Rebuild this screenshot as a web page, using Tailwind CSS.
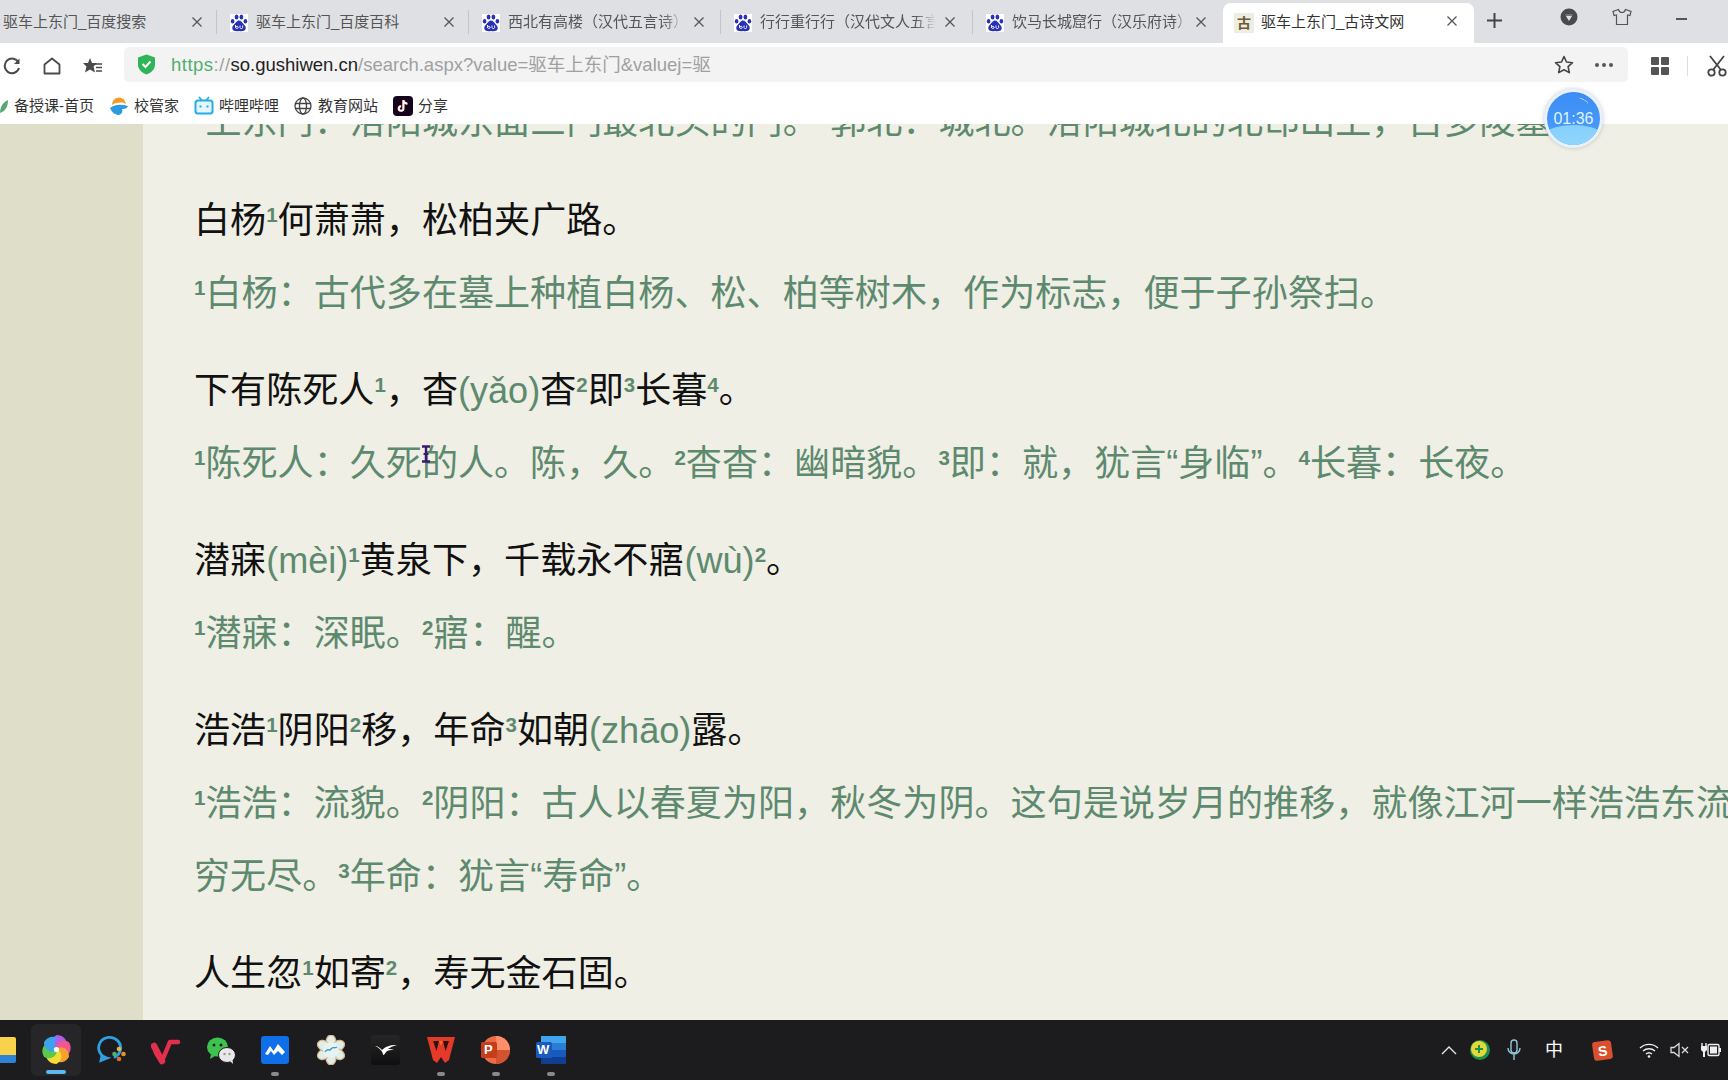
<!DOCTYPE html>
<html lang="zh-CN">
<head>
    <meta charset="UTF-8">
    <title>驱车上东门_古诗文网</title>
    <script src="https://cdn.jsdelivr.net/npm/@tailwindcss/browser@4"></script>
</head>
<body class="w-[1728px] h-[1080px] overflow-hidden flex flex-col relative bg-white font-['Liberation_Sans','Noto_Sans_CJK_SC',sans-serif]">

    <svg class="hidden">
        <symbol id="paw" viewBox="0 0 18 18">
            <rect width="18" height="18" fill="#fff"/>
            <g fill="#2932b5">
                <ellipse cx="6.600" cy="3" rx="1.900" ry="2.500"/>
                <ellipse cx="11.400" cy="3" rx="1.900" ry="2.500"/>
                <ellipse cx="2.600" cy="7.200" rx="1.800" ry="2.300"/>
                <ellipse cx="15.400" cy="7.200" rx="1.800" ry="2.300"/>
                <path d="M9 6.500c-2 0-3 2-4.500 3.500C3 11.500 1.800 13 2.400 15c.6 2.200 3.600 2.500 6.600 2 3 .5 6 .2 6.600-2 .6-2-.6-3.500-2.100-5C12 8.500 11 6.500 9 6.500z"/>
            </g>
            <path d="M5.500 11v2.500c0 1.200 2.800 1.200 2.800 0 0-1.500-2.800-1.500-2.800 0M10 11.500v2c0 1.400 2.600 1.400 2.600 0v-2" fill="none" stroke="#fff" stroke-width=".9"/>
        </symbol>
        <symbol id="x" viewBox="0 0 12 12">
            <path d="M1.500 1.500l9 9M10.500 1.500l-9 9" fill="none" stroke="#555" stroke-width="1.300"/>
        </symbol>
    </svg>

    <!-- tabs -->
    <div class="h-[43px] shrink-0 bg-[#dfe0e4] flex -ml-[36px] text-[15px] text-[#555]">
        <div class="w-[252px] h-[43px] pt-[2px] pl-[13px] pr-[13px] flex items-center">
            <svg class="w-[18px] h-[18px] shrink-0"><use href="#paw"/></svg>
            <span class="ml-[8px] w-[160px] overflow-hidden whitespace-nowrap">驱车上东门_百度搜索</span>
            <svg class="w-[12px] h-[12px] ml-[28px] -mt-[1px] shrink-0"><use href="#x"/></svg>
        </div>
        <div class="w-[252px] h-[43px] pt-[2px] pl-[13px] pr-[13px] flex items-center border-l border-[#c4c5c9] relative before:absolute before:left-[-1px] before:top-0 before:h-[10px] before:w-px before:bg-[#dfe0e4] after:absolute after:left-[-1px] after:bottom-0 after:h-[9px] after:w-px after:bg-[#dfe0e4]">
            <svg class="w-[18px] h-[18px] shrink-0"><use href="#paw"/></svg>
            <span class="ml-[8px] w-[160px] overflow-hidden whitespace-nowrap">驱车上东门_百度百科</span>
            <svg class="w-[12px] h-[12px] ml-[27px] -mt-[1px] shrink-0"><use href="#x"/></svg>
        </div>
        <div class="w-[252px] h-[43px] pt-[2px] pl-[13px] pr-[13px] flex items-center border-l border-[#c4c5c9] relative before:absolute before:left-[-1px] before:top-0 before:h-[10px] before:w-px before:bg-[#dfe0e4] after:absolute after:left-[-1px] after:bottom-0 after:h-[9px] after:w-px after:bg-[#dfe0e4]">
            <svg class="w-[18px] h-[18px] shrink-0"><use href="#paw"/></svg>
            <span class="ml-[8px] w-[176px] overflow-hidden whitespace-nowrap [mask-image:linear-gradient(to_right,#000_88%,transparent)]">西北有高楼（汉代五言诗）</span>
            <svg class="w-[12px] h-[12px] ml-[9px] -mt-[1px] shrink-0"><use href="#x"/></svg>
        </div>
        <div class="w-[252px] h-[43px] pt-[2px] pl-[13px] pr-[13px] flex items-center border-l border-[#c4c5c9] relative before:absolute before:left-[-1px] before:top-0 before:h-[10px] before:w-px before:bg-[#dfe0e4] after:absolute after:left-[-1px] after:bottom-0 after:h-[9px] after:w-px after:bg-[#dfe0e4]">
            <svg class="w-[18px] h-[18px] shrink-0"><use href="#paw"/></svg>
            <span class="ml-[8px] w-[176px] overflow-hidden whitespace-nowrap [mask-image:linear-gradient(to_right,#000_88%,transparent)]">行行重行行（汉代文人五言诗）</span>
            <svg class="w-[12px] h-[12px] ml-[8px] -mt-[1px] shrink-0"><use href="#x"/></svg>
        </div>
        <div class="w-[251px] h-[43px] pt-[2px] pl-[13px] pr-[13px] flex items-center border-l border-[#c4c5c9] relative before:absolute before:left-[-1px] before:top-0 before:h-[10px] before:w-px before:bg-[#dfe0e4] after:absolute after:left-[-1px] after:bottom-0 after:h-[9px] after:w-px after:bg-[#dfe0e4]">
            <svg class="w-[18px] h-[18px] shrink-0"><use href="#paw"/></svg>
            <span class="ml-[8px] w-[176px] overflow-hidden whitespace-nowrap [mask-image:linear-gradient(to_right,#000_92%,transparent)]">饮马长城窟行（汉乐府诗）</span>
            <svg class="w-[12px] h-[12px] ml-[7px] -mt-[1px] shrink-0"><use href="#x"/></svg>
        </div>
        <div class="w-[251px] h-[40px] mt-[3px] pl-[11px] pr-[13px] flex items-center bg-white rounded-t-[8px] text-[#333]">
            <div class="w-[20px] h-[20px] -mt-[1px] shrink-0 bg-[#eeede1] flex items-center justify-center text-[14px] leading-none font-bold text-[#6b5a35]">古</div>
            <span class="ml-[7px] w-[168px] overflow-hidden whitespace-nowrap -mt-[1px]">驱车上东门_古诗文网</span>
            <svg class="w-[12px] h-[12px] ml-[17px] -mt-[4px] shrink-0"><use href="#x"/></svg>
        </div>
        <svg class="ml-[12px] mt-[12px] w-[17px] h-[17px] shrink-0" viewBox="0 0 17 17"><path d="M8.500 1v15M1 8.500h15" stroke="#444" stroke-width="2" fill="none"/></svg>
        <svg class="ml-[57px] mt-[8px] w-[18px] h-[18px] shrink-0" viewBox="0 0 18 18"><circle cx="9" cy="9" r="8.500" fill="#4a4a4c"/><path d="M5 6.500h8L9 13z" fill="#dfe0e4"/><path d="M5 6.500h8v1.200H5z" fill="#4a4a4c"/></svg>
        <svg class="ml-[34px] mt-[8px] w-[20px] h-[18px] shrink-0" viewBox="0 0 20 18"><path d="M6.500 1.500L1 3.500l1 4 2.500-.5v9.500h11V7l2.500.5 1-4-5.500-2c-.5 2-2 3-3.500 3s-3-1-3.500-3z" fill="none" stroke="#555" stroke-width="1.200"/></svg>
        <div class="ml-[44px] mt-[18px] w-[11px] h-[1.500px] bg-[#555]"></div>
    </div>

    <!-- address bar -->
    <div class="h-[45px] shrink-0 bg-white flex items-center">
        <svg class="ml-[3px] w-[18px] h-[18px] shrink-0" viewBox="0 0 18 18"><path d="M15.500 5.500A7.300 7.300 0 1 0 16 11" fill="none" stroke="#4a4a4a" stroke-width="2"/><path d="M16.500 1.500v5.500H11z" fill="#4a4a4a"/></svg>
        <svg class="ml-[22px] w-[18px] h-[18px] shrink-0" viewBox="0 0 18 18"><path d="M9 1.500L1.500 7.500v9h15v-9z" fill="none" stroke="#4a4a4a" stroke-width="1.800" stroke-linejoin="round"/></svg>
        <svg class="ml-[22px] w-[20px] h-[18px] shrink-0" viewBox="0 0 20 18"><path d="M7 1l2 5h5l-3.500 3.500 1.500 6L7 12.500 2 15.500l1.500-6L0 6h5z" fill="#4a4a4a"/><path d="M12 7h7M13 10.500h6M13 14h6" stroke="#4a4a4a" stroke-width="1.600"/></svg>
        <div class="ml-[21px] w-[1504px] h-[35px] mb-[2px] bg-[#f3f3f3] rounded-[5px] flex items-center shrink-0">
            <svg class="ml-[13px] w-[19px] h-[21px] shrink-0" viewBox="0 0 19 21"><path d="M9.500 0.500L18 3.500v7c0 5-4 8.500-8.500 10C5 19 1 15.500 1 10.500v-7z" fill="#2fb457"/><path d="M5.500 10l3 3 5-5.500" fill="none" stroke="#fff" stroke-width="2"/></svg>
            <span class="ml-[15px] text-[18.500px] whitespace-nowrap text-[#a0a0a0]"><span class="tracking-[0.5px]"><span class="text-[#4fae6d]">https</span>://</span><span class="text-[#222]">so.gushiwen.cn</span>/search.aspx?value=驱车上东门&amp;valuej=驱</span>
            <svg class="ml-auto w-[20px] h-[19px] shrink-0" viewBox="0 0 20 19"><path d="M10 1.500l2.500 5.500 6 .7-4.400 4 1.200 5.900L10 14.700l-5.300 2.900 1.200-5.900-4.400-4 6-.7z" fill="none" stroke="#444" stroke-width="1.600" stroke-linejoin="round"/></svg>
            <div class="ml-[21px] mr-[15px] flex gap-[3px] shrink-0">
                <div class="w-[4px] h-[4px] rounded-full bg-[#555]"></div>
                <div class="w-[4px] h-[4px] rounded-full bg-[#555]"></div>
                <div class="w-[4px] h-[4px] rounded-full bg-[#555]"></div>
            </div>
        </div>
        <div class="ml-[23px] w-[18px] h-[18px] grid grid-cols-2 gap-[2px] shrink-0">
            <div class="bg-[#555] rounded-[1px]"></div><div class="bg-[#555] rounded-[1px]"></div>
            <div class="bg-[#555] rounded-[1px]"></div><div class="bg-[#555] rounded-[1px]"></div>
        </div>
        <div class="ml-[18px] w-px h-[20px] bg-[#ddd] shrink-0"></div>
        <svg class="ml-[19px] w-[20px] h-[22px] shrink-0" viewBox="0 0 20 22"><path d="M3 1l11 14M17 1L6 15" stroke="#444" stroke-width="1.800" fill="none"/><circle cx="4.500" cy="17.500" r="3.200" fill="none" stroke="#444" stroke-width="1.800"/><circle cx="15.500" cy="17.500" r="3.200" fill="none" stroke="#444" stroke-width="1.800"/></svg>
    </div>

    <!-- bookmarks -->
    <div class="h-[36px] shrink-0 bg-white flex items-center text-[15px] text-[#333] whitespace-nowrap">
        <svg class="w-[8px] h-[16px] shrink-0" viewBox="0 0 8 16"><path d="M0 15C0 9 3 4 8 2c0 6-2 11-8 13z" fill="#57a773"/></svg>
        <span class="ml-[6px]">备授课-首页</span>
        <svg class="ml-[15px] w-[20px] h-[20px] shrink-0" viewBox="0 0 20 20"><path d="M3 9a7 7 0 0 1 14-1C13 6 8 6 3 9z" fill="#f39a27"/><path d="M1 12c5-4 11-4 18-2-1 3-4 3-6 3 1 2 0 5-3 6-3 0-7-2-9-7z" fill="#2b9be0"/></svg>
        <span class="ml-[5px]">校管家</span>
        <svg class="ml-[15px] w-[20px] h-[20px] shrink-0" viewBox="0 0 20 20"><path d="M5 1l3 3.500M15 1l-3 3.500" stroke="#23ade5" stroke-width="1.800"/><rect x="1.500" y="4.500" width="17" height="13" rx="2.500" fill="#e6f6fc" stroke="#23ade5" stroke-width="2"/><path d="M6.500 9.500v2M13.500 9.500v2" stroke="#23ade5" stroke-width="2"/></svg>
        <span class="ml-[5px]">哔哩哔哩</span>
        <svg class="ml-[15px] w-[18px] h-[18px] shrink-0" viewBox="0 0 18 18"><g fill="none" stroke="#444" stroke-width="1.300"><circle cx="9" cy="9" r="8"/><ellipse cx="9" cy="9" rx="3.500" ry="8"/><path d="M1 6.500h16M1 11.500h16"/></g></svg>
        <span class="ml-[6px]">教育网站</span>
        <div class="ml-[15px] w-[20px] h-[20px] rounded-[4px] bg-[#16051a] flex items-center justify-center shrink-0">
            <svg class="w-[14px] h-[14px]" viewBox="0 0 14 14"><path d="M7 1v8.500a2.300 2.300 0 1 1-2.300-2.300M7 1.500c.5 2 2 3 4 3.200" fill="none" stroke="#e8344e" stroke-width="2"/><path d="M7.500 1v8.500a2.300 2.300 0 1 1-2.300-2.300M7.500 1.500c.5 2 2 3 4 3.200" fill="none" stroke="#fff" stroke-width="2"/></svg>
        </div>
        <span class="ml-[5px]">分享</span>
    </div>

    <!-- page -->
    <div class="h-[896px] shrink-0 bg-[#f0efe5] flex overflow-hidden">
        <div class="w-[143px] shrink-0 bg-[#dfdec9]"></div>
        <div class="-mt-[39px] ml-[51px] whitespace-nowrap text-[36.100px] leading-[73px] text-[#111]">
            <p class="text-[#5d8a6e]"><sup class="text-[20.500px] font-bold -top-[11px]">2</sup>上东门：洛阳城东面三门最北头的门。<sup class="text-[20.500px] font-bold -top-[11px]">3</sup>郭北：城北。洛阳城北的北邙山上，古多陵墓。</p>

            <p class="mt-[26px]">白杨<sup class="text-[20.500px] font-bold -top-[11px] text-[#5d8a6e]">1</sup>何萧萧，松柏夹广路。</p>
            <p class="text-[#5d8a6e]"><sup class="text-[20.500px] font-bold -top-[11px]">1</sup>白杨：古代多在墓上种植白杨、松、柏等树木，作为标志，便于子孙祭扫。</p>

            <p class="mt-[24px]">下有陈死人<sup class="text-[20.500px] font-bold -top-[11px] text-[#5d8a6e]">1</sup>，杳<span class="text-[#5d8a6e]">(yǎo)</span>杳<sup class="text-[20.500px] font-bold -top-[11px] text-[#5d8a6e]">2</sup>即<sup class="text-[20.500px] font-bold -top-[11px] text-[#5d8a6e]">3</sup>长暮<sup class="text-[20.500px] font-bold -top-[11px] text-[#5d8a6e]">4</sup>。</p>
            <p class="text-[#5d8a6e]"><sup class="text-[20.500px] font-bold -top-[11px]">1</sup>陈死人：久死的人。陈，久。<sup class="text-[20.500px] font-bold -top-[11px]">2</sup>杳杳：幽暗貌。<sup class="text-[20.500px] font-bold -top-[11px]">3</sup>即：就，犹言“身临”。<sup class="text-[20.500px] font-bold -top-[11px]">4</sup>长暮：长夜。</p>

            <p class="mt-[24px]">潜寐<span class="text-[#5d8a6e]">(mèi)</span><sup class="text-[20.500px] font-bold -top-[11px] text-[#5d8a6e]">1</sup>黄泉下，千载永不寤<span class="text-[#5d8a6e]">(wù)</span><sup class="text-[20.500px] font-bold -top-[11px] text-[#5d8a6e]">2</sup>。</p>
            <p class="text-[#5d8a6e]"><sup class="text-[20.500px] font-bold -top-[11px]">1</sup>潜寐：深眠。<sup class="text-[20.500px] font-bold -top-[11px]">2</sup>寤：醒。</p>

            <p class="mt-[24px]">浩浩<sup class="text-[20.500px] font-bold -top-[11px] text-[#5d8a6e]">1</sup>阴阳<sup class="text-[20.500px] font-bold -top-[11px] text-[#5d8a6e]">2</sup>移，年命<sup class="text-[20.500px] font-bold -top-[11px] text-[#5d8a6e]">3</sup>如朝<span class="text-[#5d8a6e]">(zhāo)</span>露。</p>
            <p class="text-[#5d8a6e]"><sup class="text-[20.500px] font-bold -top-[11px]">1</sup>浩浩：流貌。<sup class="text-[20.500px] font-bold -top-[11px]">2</sup>阴阳：古人以春夏为阳，秋冬为阴。这句是说岁月的推移，就像江河一样浩浩东流，无</p>
            <p class="text-[#5d8a6e]">穷无尽。<sup class="text-[20.500px] font-bold -top-[11px]">3</sup>年命：犹言“寿命”。</p>

            <p class="mt-[24px]">人生忽<sup class="text-[20.500px] font-bold -top-[11px] text-[#5d8a6e]">1</sup>如寄<sup class="text-[20.500px] font-bold -top-[11px] text-[#5d8a6e]">2</sup>，寿无金石固。</p>
        </div>
    </div>

    <!-- taskbar -->
    <div class="h-[60px] shrink-0 bg-[#1c1c1e] flex items-center">
        <div class="-ml-[12px] w-[28px] h-[26px] rounded-[2px] shrink-0 bg-[linear-gradient(#f8d24a_70%,#2f83d6_70%)]"></div>
        <div class="ml-[15px] w-[50px] h-[52px] rounded-[6px] bg-[#262628] flex items-center justify-center relative shrink-0">
            <svg class="w-[31px] h-[31px] -mt-[2px]" viewBox="0 0 30 30">
                <path d="M15 15C9 13 8 5 15 1c6 0 10 4 10 9-4-1-8 1-10 5z" fill="#b45be8"/>
                <path d="M15 15C9 13 8 5 15 1c6 0 10 4 10 9-4-1-8 1-10 5z" fill="#f0568f" transform="rotate(60 15 15)"/>
                <path d="M15 15C9 13 8 5 15 1c6 0 10 4 10 9-4-1-8 1-10 5z" fill="#f7a02c" transform="rotate(120 15 15)"/>
                <path d="M15 15C9 13 8 5 15 1c6 0 10 4 10 9-4-1-8 1-10 5z" fill="#f2dc38" transform="rotate(180 15 15)"/>
                <path d="M15 15C9 13 8 5 15 1c6 0 10 4 10 9-4-1-8 1-10 5z" fill="#5bc84e" transform="rotate(240 15 15)"/>
                <path d="M15 15C9 13 8 5 15 1c6 0 10 4 10 9-4-1-8 1-10 5z" fill="#3da2ee" transform="rotate(300 15 15)"/>
                <circle cx="15" cy="15" r="2.500" fill="#fff"/>
            </svg>
            <div class="absolute bottom-[2px] left-[15px] w-[20px] h-[4px] rounded-full bg-[#5cb8ee]"></div>
        </div>
        <div class="ml-[15px] w-[32px] h-[30px] shrink-0">
            <svg viewBox="0 0 32 30"><path d="M19 22a11 10.500 0 1 0-8 1l-6 2.500 1-5" fill="none" stroke="#2f9fe0" stroke-width="2.800" stroke-linecap="round"/><circle cx="23" cy="14" r="2.300" fill="#e9b92f"/><circle cx="18.500" cy="19" r="2.300" fill="#4fb36d"/><circle cx="27.500" cy="19" r="2.300" fill="#e8902f"/><circle cx="23" cy="24" r="2.300" fill="#e06a30"/></svg>
        </div>
        <div class="ml-[23px] w-[30px] h-[30px] shrink-0">
            <svg viewBox="0 0 30 30"><path d="M4 13c0 5 3 9 7 13l8-19h8" fill="none" stroke="#e2304c" stroke-width="4.500" stroke-linecap="round" stroke-linejoin="round"/><path d="M3 11l8 15" stroke="#e2304c" stroke-width="6.500" stroke-linecap="round"/></svg>
        </div>
        <div class="ml-[25px] w-[30px] h-[30px] shrink-0">
            <svg viewBox="0 0 30 30"><ellipse cx="11.500" cy="12" rx="10.500" ry="9.500" fill="#3dc24f"/><path d="M5 19l-1 5 5-3z" fill="#3dc24f"/><ellipse cx="21" cy="20" rx="8.500" ry="7.500" fill="#e8e8e8" stroke="#1c1c1e"/><path d="M24 26l3 3-.5-4.500z" fill="#e8e8e8"/><circle cx="8" cy="10" r="1.500" fill="#1c1c1e"/><circle cx="15" cy="10" r="1.500" fill="#1c1c1e"/><circle cx="18.500" cy="19" r="1.200" fill="#999"/><circle cx="23.500" cy="19" r="1.200" fill="#999"/></svg>
        </div>
        <div class="ml-[25px] w-[28px] h-[28px] rounded-[3px] bg-[#0f6fe8] flex items-center justify-center relative shrink-0">
            <svg class="w-[22px] h-[14px]" viewBox="0 0 22 14"><path d="M1 11L6 3l3.500 5L14 1l7 8-3 3-4-4-4 4-3-4-3 4z" fill="#fff"/></svg>
            <div class="absolute -bottom-[12px] left-[10px] w-[8px] h-[4px] rounded-full bg-[#8a8a8c]"></div>
        </div>
        <div class="ml-[28px] w-[28px] h-[30px] shrink-0">
            <svg viewBox="0 0 28 30"><g fill="#dfeee8" stroke="#d8b48c" stroke-width="1.200"><ellipse cx="14" cy="7" rx="5" ry="7"/><ellipse cx="14" cy="7" rx="5" ry="7" transform="rotate(60 14 15)"/><ellipse cx="14" cy="7" rx="5" ry="7" transform="rotate(120 14 15)"/><ellipse cx="14" cy="7" rx="5" ry="7" transform="rotate(180 14 15)"/><ellipse cx="14" cy="7" rx="5" ry="7" transform="rotate(240 14 15)"/><ellipse cx="14" cy="7" rx="5" ry="7" transform="rotate(300 14 15)"/></g><circle cx="14" cy="15" r="8" fill="#e6f3ef"/><path d="M8 17c3-5 4 0 6-3s3 0 6-2" fill="none" stroke="#3a9ad0" stroke-width="1.400"/></svg>
        </div>
        <div class="ml-[26px] w-[29px] h-[30px] rounded-[3px] bg-[linear-gradient(#262626,#0f0f0f)] flex items-center justify-center shrink-0">
            <svg class="w-[22px] h-[12px]" viewBox="0 0 22 12"><path d="M0 2c3 0 5 2 7 4 3-3 7-5 15-5-5 1-7 3-9 4 2 0 4 0 6 1-3 0-6 0-8 2-1 2-2 3-3 3 0-3-3-7-8-9z" fill="#fff"/></svg>
        </div>
        <div class="ml-[26px] w-[30px] h-[30px] relative shrink-0">
            <svg viewBox="0 0 30 30"><path d="M1 2h28l-6 23-4 3-4-6-4 6-4-3z" fill="#e5392a"/><path d="M7 6h6l-2.500 10zM17 6h6l-3.500 10z" fill="#2a1412"/><path d="M13 6l2 5 2-5z" fill="#f26a2e"/></svg>
            <div class="absolute -bottom-[11px] left-[11px] w-[8px] h-[4px] rounded-full bg-[#8a8a8c]"></div>
        </div>
        <div class="ml-[25px] w-[30px] h-[30px] relative shrink-0">
            <svg viewBox="0 0 30 30"><circle cx="15" cy="15" r="14" fill="#ed6c47"/><path d="M15 15V1a14 14 0 0 1 14 14z" fill="#ff8f6b"/><path d="M15 15h14a14 14 0 0 1-14 14z" fill="#d35230"/><rect x="0" y="7" width="16" height="16" rx="1.500" fill="#c43e1c"/></svg>
            <span class="absolute left-[3px] top-[7px] text-[13px] leading-[16px] font-bold text-white">P</span>
            <div class="absolute -bottom-[11px] left-[11px] w-[8px] h-[4px] rounded-full bg-[#8a8a8c]"></div>
        </div>
        <div class="ml-[25px] w-[30px] h-[30px] relative shrink-0">
            <svg viewBox="0 0 30 30"><rect x="5" y="1" width="25" height="28" rx="1.500" fill="#2b7cd3"/><rect x="5" y="1" width="25" height="7" fill="#41a5ee"/><rect x="5" y="15" width="25" height="7" fill="#185abd"/><rect x="5" y="22" width="25" height="7" fill="#103f91"/><rect x="0" y="7" width="16" height="16" rx="1.500" fill="#185abd"/></svg>
            <span class="absolute left-[1px] top-[7px] text-[13px] leading-[16px] font-bold text-white">W</span>
            <div class="absolute -bottom-[11px] left-[11px] w-[8px] h-[4px] rounded-full bg-[#8a8a8c]"></div>
        </div>

        <svg class="ml-auto w-[16px] h-[10px] shrink-0" viewBox="0 0 16 10"><path d="M1 9l7-7 7 7" fill="none" stroke="#e6e6e6" stroke-width="1.400"/></svg>
        <svg class="ml-[13px] w-[20px] h-[20px] shrink-0" viewBox="0 0 20 20"><circle cx="10" cy="10" r="10" fill="#1d8f4e"/><circle cx="9" cy="9" r="8" fill="#e3d93a"/><path d="M9 5v8M5 9h8" stroke="#1d8f4e" stroke-width="2"/></svg>
        <svg class="ml-[17px] w-[14px] h-[22px] shrink-0" viewBox="0 0 14 22"><rect x="4" y="1" width="6" height="13" rx="3" fill="none" stroke="#8fc7dc" stroke-width="1.400"/><path d="M1 9a6 6 0 0 0 12 0M7 15v6" fill="none" stroke="#8fc7dc" stroke-width="1.400"/></svg>
        <span class="ml-[24px] w-[19px] text-[18px] leading-none text-white shrink-0">中</span>
        <div class="ml-[29px] w-[19px] h-[19px] rounded-[3px] bg-[#d9502e] rotate-[-8deg] flex items-center justify-center shrink-0 text-[14px] leading-none font-bold text-white">S</div>
        <svg class="ml-[27px] w-[20px] h-[15px] shrink-0" viewBox="0 0 20 15"><g fill="none" stroke="#eee" stroke-width="1.400"><path d="M1 5a13 13 0 0 1 18 0M4 8a9 9 0 0 1 12 0M7 11a4.500 4.500 0 0 1 6 0"/></g><circle cx="10" cy="13.500" r="1.300" fill="#eee"/></svg>
        <svg class="ml-[11px] w-[20px] h-[16px] shrink-0" viewBox="0 0 20 16"><path d="M1 5.500h3L9 1.500v13l-5-4H1z" fill="none" stroke="#ddd" stroke-width="1.300"/><path d="M12 5l6 6M18 5l-6 6" stroke="#ddd" stroke-width="1.300"/></svg>
        <svg class="ml-[11px] mr-[6px] w-[21px] h-[16px] shrink-0" viewBox="0 0 21 16"><path d="M1 1v3M5 1v3" stroke="#eee" stroke-width="1.400"/><path d="M0 4h6v4l-2 2v5H2v-5L0 8z" fill="#eee"/><rect x="7" y="2.500" width="11" height="11" rx="1.500" fill="none" stroke="#eee" stroke-width="1.400"/><rect x="9" y="4.500" width="7" height="7" fill="#eee"/><rect x="18" y="6" width="2" height="4" fill="#eee"/></svg>
    </div>

    <!-- timer bubble -->
    <div class="absolute left-[1544px] top-[89px] w-[59px] h-[59px] rounded-full p-[3px] bg-[#e8f2f8] shadow-[0_0_4px_rgba(80,110,140,0.35)]">
        <div class="w-full h-full rounded-full overflow-hidden relative bg-[linear-gradient(#3b8cf5,#4f9ff9)] flex items-center justify-center text-[16px] text-[#dff4ff]">
            <div class="absolute left-[-20px] top-[33px] w-[93px] h-[60px] rounded-[50%] bg-[linear-gradient(#86cffc,#a4e6fd)]"></div>
            <span class="relative">01:36</span>
            <div class="absolute left-[31px] top-[7px] w-[10px] h-[6px] border-t border-white/70 rounded-full rotate-[30deg]"></div>
        </div>
    </div>

    <!-- text cursor -->
    <svg class="absolute left-[420px] top-[445px] w-[12px] h-[18px]" viewBox="0 0 12 18"><path d="M2 1.500h8M6 1.500v15M2 16.500h8" fill="none" stroke="#3a1a6e" stroke-width="2.400"/><path d="M3.500 9h5" stroke="#3a1a6e" stroke-width="2"/></svg>
</body>
</html>
